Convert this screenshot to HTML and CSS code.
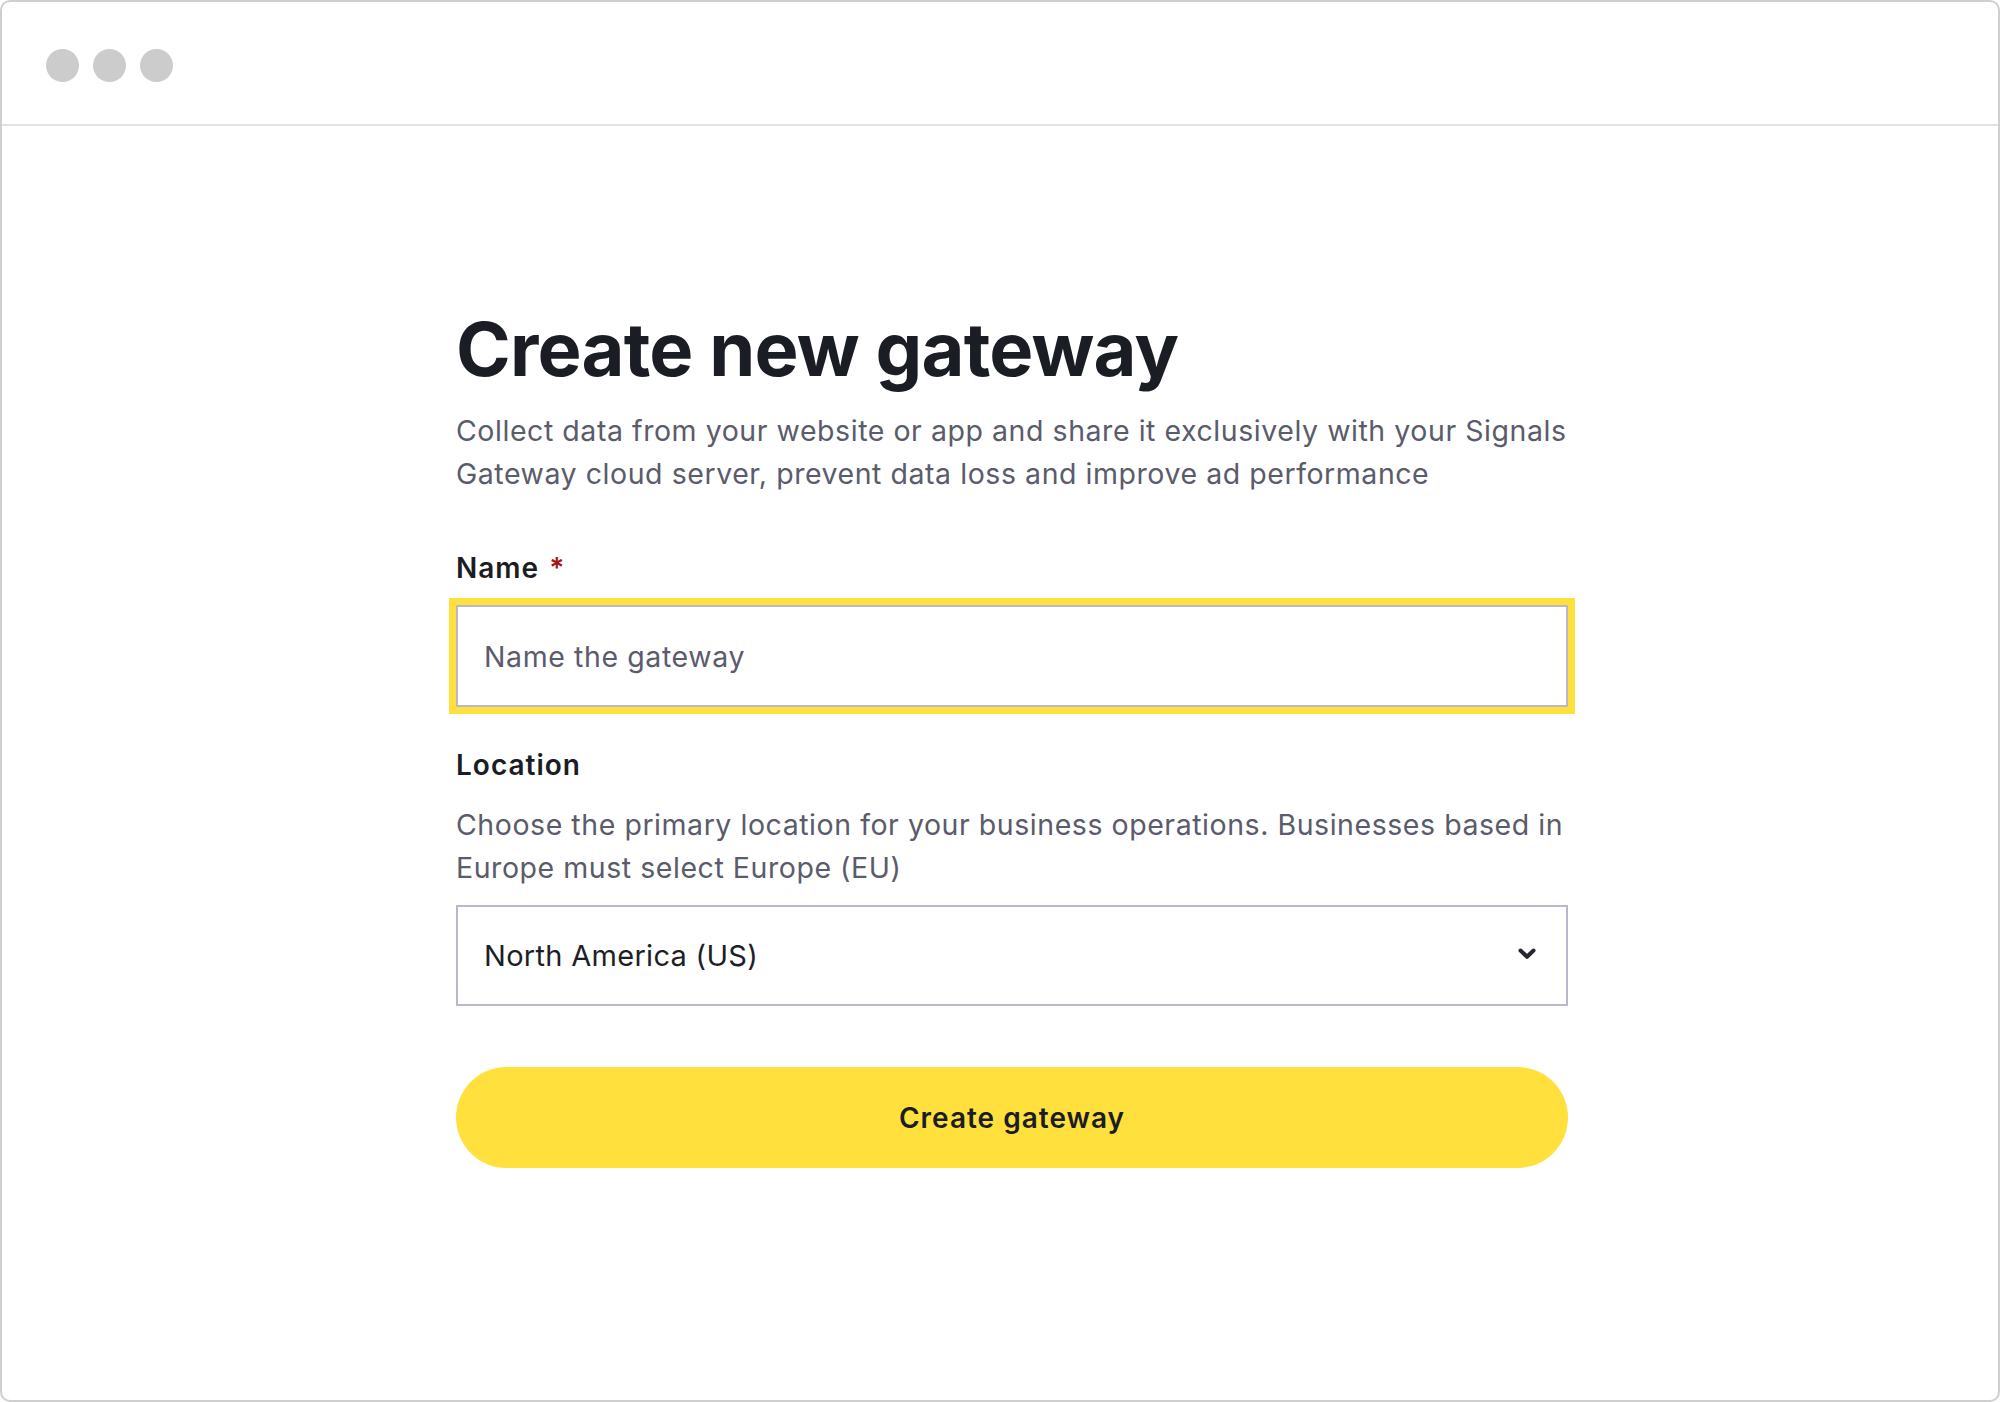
FILE: index.html
```html
<!DOCTYPE html>
<html lang="en">
<head>
<meta charset="utf-8">
<title>Create new gateway</title>
<link rel="stylesheet" href="styles.css">
</head>
<body>
<div class="window">
  <header class="titlebar">
    <span class="dot"></span>
    <span class="dot"></span>
    <span class="dot"></span>
  </header>
  <main class="main">
    <div class="content">
      <h1 class="title">Create new gateway</h1>
      <p class="desc">Collect data from your website or app and share it exclusively with your Signals Gateway cloud server, prevent data loss and improve ad performance</p>

      <label class="label label-name" for="gw-name">Name <span class="req">*</span></label>
      <div class="input-ring">
        <input class="input" id="gw-name" type="text" placeholder="Name the gateway">
      </div>

      <div class="label label-loc">Location</div>
      <p class="desc desc-loc">Choose the primary location for your business operations. Businesses based in Europe must select Europe (EU)</p>
      <div class="select">
        <span class="select-value">North America (US)</span>
        <svg class="chevron" width="18" height="12" viewBox="0 0 18 12" aria-hidden="true">
          <path d="M2.5 2.5 L9 8.8 L15.5 2.5" fill="none" stroke="#26272f" stroke-width="4" stroke-linecap="round" stroke-linejoin="round"/>
        </svg>
      </div>

      <button class="button" type="button">Create gateway</button>
    </div>
  </main>
</div>
</body>
</html>
```

FILE: styles.css
```css
* { box-sizing: border-box; }

html, body {
  margin: 0;
  padding: 0;
  background: #ffffff;
}

body {
  font-family: Inter, "Noto Sans", "Liberation Sans", sans-serif;
  color: #1b1d25;
}

.window {
  width: 2000px;
  height: 1402px;
  border: 2px solid #cfcfcf;
  border-radius: 10px;
  background: #ffffff;
  overflow: hidden;
}

.titlebar {
  height: 124px;
  border-bottom: 2px solid #e3e3e3;
  display: flex;
  align-items: center;
  gap: 14px;
  padding: 4px 0 0 44px;
}

.dot {
  width: 33px;
  height: 33px;
  border-radius: 50%;
  background: #cccccc;
}

.main {
  padding-top: 178px;
}

.content {
  width: 1112px;
  margin-left: 454px;
  display: flex;
  flex-direction: column;
}

.title {
  margin: 0;
  font-size: 74px;
  line-height: 90px;
  font-weight: 700;
  letter-spacing: -0.8px;
  color: #1b1d25;
}

.desc {
  margin: 15px -14px 0 0;
  font-size: 28.5px;
  line-height: 43px;
  font-weight: 400;
  letter-spacing: 0.55px;
  color: #5a5b6b;
}

.label {
  font-size: 28px;
  line-height: 32px;
  font-weight: 600;
  letter-spacing: 1px;
  color: #1b1d25;
}

.label-name {
  margin-top: 57px;
}

.req {
  color: #a3171b;
  margin-left: 2px;
}

.input-ring {
  margin-top: 21px;
  outline: 7px solid #ffe03d;
}

.input {
  display: block;
  width: 100%;
  height: 102px;
  border: 2px solid #b9b7cb;
  border-radius: 0;
  padding: 0 26px;
  font-family: inherit;
  font-size: 28.5px;
  letter-spacing: 0.6px;
  color: #1b1d25;
  background: #ffffff;
  outline: none;
}

.input::placeholder {
  color: #5c5b6e;
  opacity: 1;
}

.label-loc {
  margin-top: 42px;
}

.desc-loc {
  margin-top: 22px;
}

.select {
  margin-top: 16px;
  height: 101px;
  border: 2px solid #b9b7cb;
  display: flex;
  align-items: center;
  justify-content: space-between;
  padding: 0 30px 0 26px;
}

.select-value {
  font-size: 29px;
  letter-spacing: 0.3px;
  color: #1e1e28;
}

.chevron {
  display: block;
  margin-top: -4px;
}

.button {
  margin-top: 61px;
  height: 101px;
  border: none;
  border-radius: 51px;
  background: #ffe03d;
  font-family: inherit;
  font-size: 28px;
  font-weight: 600;
  letter-spacing: 1px;
  color: #1b1d25;
  cursor: pointer;
}
```
